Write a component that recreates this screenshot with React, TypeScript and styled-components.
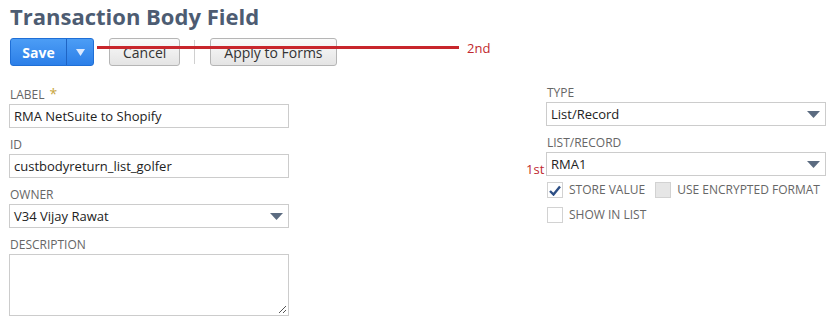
import React from "react";
import styled, { createGlobalStyle } from "styled-components";

const Global = createGlobalStyle`
  body {
    margin: 0;
    background: #fff;
    font-family: "Open Sans", "Liberation Sans", sans-serif;
  }
`;

const Page = styled.div`
  position: relative;
  width: 832px;
  height: 320px;
  overflow: hidden;
  padding: 0 6px 0 9px;
  box-sizing: border-box;
`;

const Title = styled.h1`
  margin: 0;
  padding: 2px 0 0 1px;
  font-size: 22px;
  line-height: 29px;
  font-weight: 700;
  color: #4d5c72;
`;

const Toolbar = styled.div`
  display: flex;
  align-items: center;
  margin-top: 7px;
  padding-left: 1px;
`;

const SplitButton = styled.div`
  display: flex;
  height: 28px;
  border: 1px solid #1f6fd6;
  border-radius: 3px;
  background: linear-gradient(#4c9df5, #2c7fe8);
  box-sizing: border-box;
`;

const SaveLabel = styled.span`
  display: flex;
  align-items: center;
  justify-content: center;
  width: 55px;
  color: #fff;
  font-size: 14px;
  font-weight: 700;
`;

const Caret = styled.span`
  display: flex;
  align-items: center;
  justify-content: center;
  width: 26px;
  border-left: 1px solid #1f64c4;
`;

const GrayButton = styled.button<{ $gap: number }>`
  height: 28px;
  padding: 0 13px;
  margin-left: ${(p) => p.$gap}px;
  border: 1px solid #b5b5b5;
  border-radius: 3px;
  background: linear-gradient(#fafafa, #e4e4e4);
  font-family: inherit;
  font-size: 14px;
  color: #333;
`;

const Divider = styled.span`
  width: 1px;
  height: 24px;
  margin-left: 14px;
  background: #d0d0d0;
`;

const Columns = styled.div`
  display: flex;
  justify-content: space-between;
  margin-top: 21px;
`;

const Column = styled.div<{ $top: number }>`
  width: 280px;
  position: relative;
  margin-top: ${(p) => p.$top}px;
`;

const Field = styled.div`
  position: relative;
  margin-bottom: 10px;
`;

const Label = styled.div`
  font-size: 12px;
  line-height: 14px;
  color: #666;
  text-transform: uppercase;
  margin-bottom: 2px;
  padding-left: 1px;
`;

const Star = styled.span`
  color: #c9a640;
  margin-left: 5px;
  font-size: 14px;
`;

const Box = styled.div`
  height: 24px;
  border: 1px solid #cccccc;
  box-sizing: border-box;
  display: flex;
  align-items: center;
  justify-content: space-between;
  padding: 0 5px 0 4px;
  font-size: 13px;
  color: #222;
`;

const Area = styled.div`
  position: relative;
  height: 62px;
  border: 1px solid #cccccc;
  box-sizing: border-box;
`;

const Grip = styled.svg`
  position: absolute;
  right: 1px;
  bottom: 1px;
`;

const CheckRow = styled.div<{ $top: number }>`
  display: flex;
  align-items: center;
  height: 16px;
  margin-top: ${(p) => p.$top}px;
  padding-left: 1px;
  white-space: nowrap;
`;

const Check = styled.span<{ $disabled?: boolean }>`
  flex: none;
  width: 16px;
  height: 16px;
  border: 1px solid #d2d2d2;
  background: ${(p) => (p.$disabled ? "#e6e6e6" : "#fff")};
  box-sizing: border-box;
  display: flex;
  align-items: center;
  justify-content: center;
`;

const CheckText = styled.span`
  flex: none;
  margin: 0 10px 0 6px;
  font-size: 12px;
  line-height: 16px;
  color: #666;
  text-transform: uppercase;
`;

const Note = styled.span`
  position: absolute;
  color: #c0282e;
  font-size: 13px;
`;

const RedLine = styled.div`
  position: absolute;
  left: 97px;
  top: 46px;
  width: 362px;
  height: 3px;
  background: #c8262c;
`;

const Arrow = () => (
  <svg width="13" height="7" viewBox="0 0 13 7">
    <path d="M0 0 H13 L6.5 7 Z" fill="#5b6b80" />
  </svg>
);

export default function App() {
  return (
    <Page>
      <Global />
      <Title>Transaction Body Field</Title>
      <Toolbar>
        <SplitButton>
          <SaveLabel>Save</SaveLabel>
          <Caret>
            <svg width="9" height="7" viewBox="0 0 9 7">
              <path d="M0 0 H9 L4.5 7 Z" fill="#dbe9ff" />
            </svg>
          </Caret>
        </SplitButton>
        <GrayButton $gap={15}>Cancel</GrayButton>
        <Divider />
        <GrayButton $gap={15}>Apply to Forms</GrayButton>
      </Toolbar>
      <RedLine />
      <Note style={{ left: 467, top: 39 }}>2nd</Note>
      <Columns>
        <Column $top={0}>
          <Field>
            <Label>
              Label<Star>*</Star>
            </Label>
            <Box>RMA NetSuite to Shopify</Box>
          </Field>
          <Field>
            <Label>ID</Label>
            <Box>custbodyreturn_list_golfer</Box>
          </Field>
          <Field>
            <Label>Owner</Label>
            <Box>
              V34 Vijay Rawat
              <Arrow />
            </Box>
          </Field>
          <Field>
            <Label>Description</Label>
            <Area>
              <Grip width="10" height="10" viewBox="0 0 10 10">
                <path d="M9 2 L2 9 M9 6 L6 9" stroke="#555" strokeWidth="1" />
              </Grip>
            </Area>
          </Field>
        </Column>
        <Column $top={-1}>
          <Field>
            <Label>Type</Label>
            <Box>
              List/Record
              <Arrow />
            </Box>
          </Field>
          <Field>
            <Label>List/Record</Label>
            <Box>
              RMA1
              <Arrow />
            </Box>
            <Note style={{ left: -20, top: 24 }}>1st</Note>
          </Field>
          <CheckRow $top={-4}>
            <Check>
              <svg width="12" height="11" viewBox="0 0 12 11">
                <path d="M1 6 L4.5 9.5 L11 1.5" fill="none" stroke="#2d4f86" strokeWidth="2.4" />
              </svg>
            </Check>
            <CheckText>Store Value</CheckText>
            <Check $disabled />
            <CheckText>Use Encrypted Format</CheckText>
          </CheckRow>
          <CheckRow $top={9}>
            <Check />
            <CheckText>Show in List</CheckText>
          </CheckRow>
        </Column>
      </Columns>
    </Page>
  );
}
